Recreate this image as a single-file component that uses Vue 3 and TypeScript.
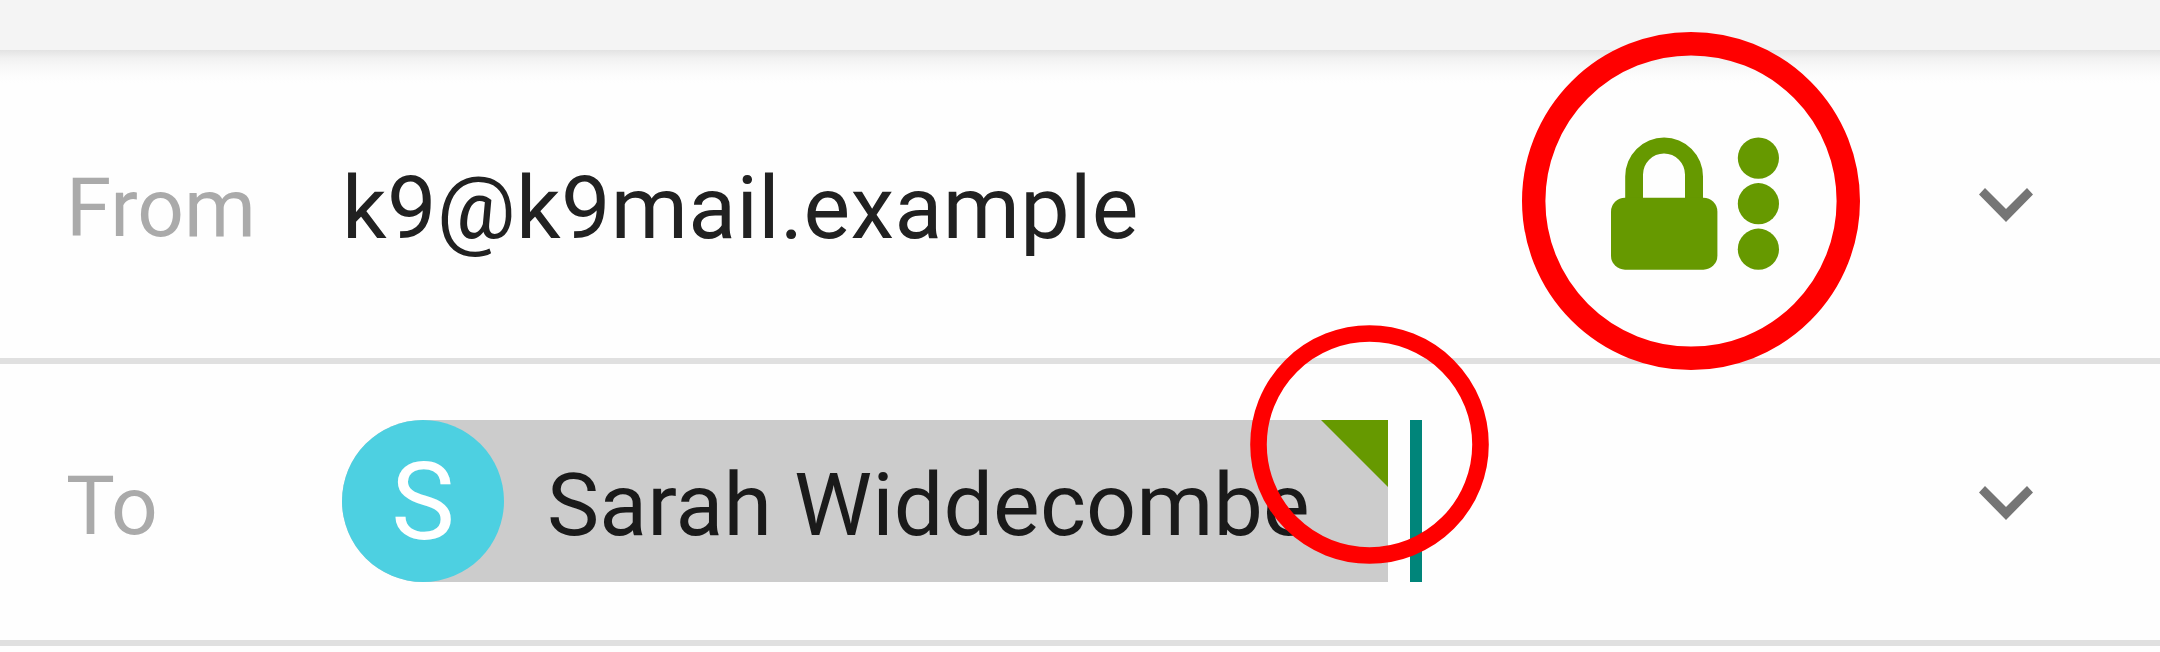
<script setup lang="ts">
interface Recipient {
  name: string
  initial: string
}

const sender: string = 'k9@k9mail.example'
const recipient: Recipient = { name: 'Sarah Widdecombe', initial: 'S' }
</script>

<template>
  <main class="compose">
    <header class="toolbar"></header>
    <section class="row from-row">
      <span class="label">From</span>
      <span class="value">{{ sender }}</span>
      <svg class="crypto" viewBox="0 0 170 134" aria-label="Encrypted">
        <path d="M14.2 61V39.5A38.9 38.9 0 0 1 92 39.5V61H74V37.5A21 21 0 0 0 32 37.5V61Z" />
        <rect x="0" y="60.7" width="106.4" height="72" rx="14" />
        <circle cx="147.4" cy="21.1" r="20.6" />
        <circle cx="147.4" cy="66.7" r="20.6" />
        <circle cx="147.4" cy="112.2" r="20.6" />
      </svg>
      <svg class="chevron" viewBox="0 0 54 34">
        <path d="M6 0L27 21L48 0L54 6.5L27 34L0 6.5Z" />
      </svg>
    </section>
    <section class="row to-row">
      <span class="label">To</span>
      <div class="chip">
        <span class="avatar">{{ recipient.initial }}</span>
        <span class="name">{{ recipient.name }}</span>
        <span class="corner"></span>
      </div>
      <span class="cursor"></span>
      <svg class="chevron" viewBox="0 0 54 34">
        <path d="M6 0L27 21L48 0L54 6.5L27 34L0 6.5Z" />
      </svg>
    </section>
    <svg class="rings" viewBox="0 0 2160 652">
      <circle cx="1691" cy="201" r="157.3" stroke-width="23.4" />
      <circle cx="1369.5" cy="444.5" r="111" stroke-width="16.6" />
    </svg>
  </main>
</template>

<style>
body {
  margin: 0;
  background: #fefefe;
}
</style>

<style scoped>
.compose {
  position: relative;
  width: 2160px;
  height: 652px;
  overflow: hidden;
  background: #fefefe;
  font-family: Roboto, sans-serif;
  color: #212121;
}
.toolbar {
  height: 50px;
  background: #f4f4f4;
}
.row {
  display: flex;
  align-items: center;
  box-sizing: border-box;
  border-bottom: 6px solid #e0e0e0;
  padding: 0 127px 0 66px;
}
.from-row {
  height: 314px;
  background: linear-gradient(#e3e3e3 0, #e8e8e8 3px, #f1f1f1 8px, #f8f8f8 17px, #fcfcfc 25px, #fefefe 33px);
}
.to-row {
  height: 282px;
}
.label {
  width: 276px;
  flex: none;
  padding-top: 8px;
  font-size: 82px;
  line-height: 100px;
  color: #aaa;
}
.value {
  padding-top: 8px;
  font-size: 88px;
  line-height: 104px;
  letter-spacing: 0.33px;
  white-space: nowrap;
}
.crypto {
  width: 170px;
  height: 134px;
  margin: 0 198px 0 auto;
  fill: #690;
}
.chevron {
  width: 54px;
  height: 34px;
  flex: none;
  margin-top: 2px;
  fill: #757575;
}
.to-row .chevron {
  margin-left: auto;
}
.chip {
  position: relative;
  display: flex;
  align-items: center;
  width: 1046px;
  height: 162px;
  margin-bottom: 2px;
  background: #ccc;
  border-radius: 81px 0 0 81px;
}
.avatar {
  width: 162px;
  height: 162px;
  border-radius: 50%;
  background: #4dd0e1;
  color: #fff;
  font-size: 107px;
  line-height: 165px;
  text-align: center;
}
.name {
  margin-left: 43px;
  padding-top: 8px;
  font-size: 88px;
  line-height: 104px;
  letter-spacing: 0.1px;
  color: #1a1a1a;
  white-space: nowrap;
}
.corner {
  position: absolute;
  top: 0;
  right: 0;
  width: 67px;
  height: 67px;
  background: #690;
  clip-path: polygon(0 0, 100% 0, 100% 100%);
}
.cursor {
  width: 12px;
  height: 162px;
  margin: 0 0 2px 22px;
  background: #00857a;
}
.rings {
  position: absolute;
  inset: 0;
  width: 2160px;
  height: 652px;
  fill: none;
  stroke: #f00;
}
</style>
